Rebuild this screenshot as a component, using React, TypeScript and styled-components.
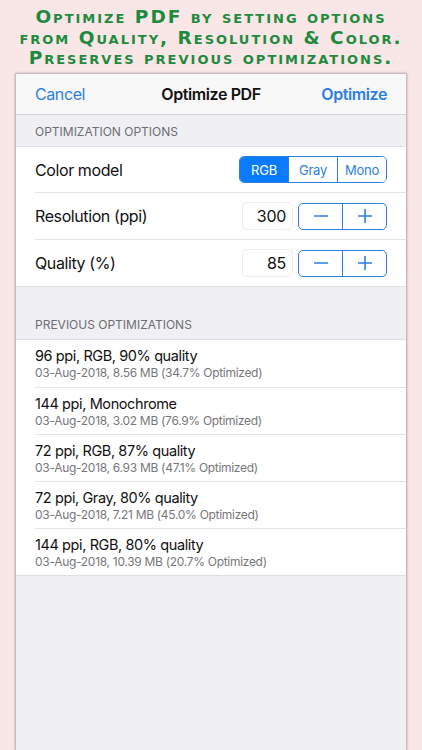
import styled, { createGlobalStyle } from "styled-components";

const GlobalStyle = createGlobalStyle`
  html, body {
    margin: 0;
    padding: 0;
    background: #f9e6e7;
  }
  body {
    font-family: Inter, "Liberation Sans", sans-serif;
  }
`;

const Page = styled.div`
  display: flex;
  flex-direction: column;
  height: 750px;
  overflow: hidden;
  background: #f9e6e7;
`;

const Headline = styled.h1`
  margin: 0;
  padding: 7px 0 5px;
  height: 74px;
  box-sizing: border-box;
  text-align: center;
  white-space: nowrap;
  font-family: "DejaVu Sans", sans-serif;
  font-variant: small-caps;
  font-weight: bold;
  font-size: 18.5px;
  line-height: 20.5px;
  letter-spacing: 2px;
  color: #1e8a3e;
`;

const Card = styled.div`
  flex: 1;
  margin: 0 16px;
  background: #efeff4;
  box-shadow: 0 0 2px 1px rgba(0, 0, 0, 0.28);
  display: flex;
  flex-direction: column;
`;

const NavBar = styled.div`
  height: 40px;
  display: flex;
  align-items: center;
  justify-content: space-between;
  padding: 0 19px;
  background: #f8f8f8;
  border-bottom: 1px solid #d4d4d8;
  position: relative;
`;

const NavButton = styled.span<{ $bold?: boolean }>`
  font-size: 16px;
  letter-spacing: -0.4px;
  color: #2c7ee3;
  font-weight: ${(p) => (p.$bold ? 600 : 400)};
`;

const NavTitle = styled.span`
  position: absolute;
  left: 0;
  right: 0;
  text-align: center;
  font-size: 16px;
  letter-spacing: -0.4px;
  font-weight: 600;
  color: #111;
  pointer-events: none;
`;

const SectionHeader = styled.div<{ $height: number }>`
  height: ${(p) => p.$height}px;
  display: flex;
  align-items: flex-end;
  padding: 0 19px 7px;
  box-sizing: border-box;
  font-size: 12px;
  color: #6d6d72;
`;

const Group = styled.div`
  background: #fff;
  border-top: 1px solid #e0e0e4;
  border-bottom: 1px solid #e0e0e4;
`;

const Row = styled.div<{ $height: number }>`
  height: ${(p) => p.$height}px;
  margin-left: 19px;
  padding-right: 19px;
  display: flex;
  align-items: center;
  justify-content: space-between;
  box-sizing: border-box;
  & + & {
    border-top: 1px solid #e3e3e7;
  }
`;

const Label = styled.span`
  font-size: 16px;
  letter-spacing: -0.4px;
  color: #111;
`;

const Segmented = styled.div`
  display: flex;
  border: 1px solid #2c7ee3;
  border-radius: 5px;
  overflow: hidden;
  height: 25px;
`;

const Segment = styled.div<{ $active?: boolean }>`
  width: 48px;
  display: flex;
  align-items: center;
  justify-content: center;
  font-size: 13px;
  letter-spacing: -0.2px;
  color: ${(p) => (p.$active ? "#fff" : "#2c7ee3")};
  background: ${(p) => (p.$active ? "#0a7bff" : "#fff")};
  & + & {
    border-left: 1px solid #2c7ee3;
  }
`;

const Controls = styled.div`
  display: flex;
  align-items: center;
  gap: 5px;
`;

const ValueBox = styled.div`
  width: 51px;
  height: 28px;
  box-sizing: border-box;
  border: 1px solid #ececef;
  border-radius: 5px;
  display: flex;
  align-items: center;
  justify-content: flex-end;
  padding-right: 6px;
  font-size: 16px;
  letter-spacing: -0.3px;
  color: #111;
`;

const Stepper = styled.div`
  display: flex;
  width: 89px;
  height: 27px;
  box-sizing: border-box;
  border: 1px solid #2c7ee3;
  border-radius: 5px;
  overflow: hidden;
`;

const StepButton = styled.div`
  flex: 1;
  display: flex;
  align-items: center;
  justify-content: center;
  & + & {
    border-left: 1px solid #2c7ee3;
  }
`;

const ItemText = styled.div`
  display: flex;
  flex-direction: column;
`;

const ItemTitle = styled.span`
  font-size: 14.5px;
  line-height: 18px;
  letter-spacing: -0.4px;
  color: #111;
`;

const ItemSub = styled.span`
  font-size: 12px;
  line-height: 15px;
  letter-spacing: -0.3px;
  color: #76767b;
`;

const Minus = () => (
  <svg width="16" height="16" viewBox="0 0 16 16">
    <path d="M1 8h14" stroke="#2c7ee3" strokeWidth="1.6" />
  </svg>
);

const Plus = () => (
  <svg width="16" height="16" viewBox="0 0 16 16">
    <path d="M1 8h14M8 1v14" stroke="#2c7ee3" strokeWidth="1.6" />
  </svg>
);

const history = [
  { title: "96 ppi, RGB, 90% quality", sub: "03-Aug-2018, 8.56 MB (34.7% Optimized)" },
  { title: "144 ppi, Monochrome", sub: "03-Aug-2018, 3.02 MB (76.9% Optimized)" },
  { title: "72 ppi, RGB, 87% quality", sub: "03-Aug-2018, 6.93 MB (47.1% Optimized)" },
  { title: "72 ppi, Gray, 80% quality", sub: "03-Aug-2018, 7.21 MB (45.0% Optimized)" },
  { title: "144 ppi, RGB, 80% quality", sub: "03-Aug-2018, 10.39 MB (20.7% Optimized)" },
];

function StepperRow({ label, value }: { label: string; value: string }) {
  return (
    <Row $height={47}>
      <Label>{label}</Label>
      <Controls>
        <ValueBox>{value}</ValueBox>
        <Stepper>
          <StepButton>
            <Minus />
          </StepButton>
          <StepButton>
            <Plus />
          </StepButton>
        </Stepper>
      </Controls>
    </Row>
  );
}

export default function App() {
  return (
    <Page>
      <GlobalStyle />
      <Headline>
        Optimize PDF by setting options
        <br />
        from Quality, Resolution &amp; Color.
        <br />
        Preserves previous optimizations.
      </Headline>
      <Card>
        <NavBar>
          <NavButton>Cancel</NavButton>
          <NavTitle>Optimize PDF</NavTitle>
          <NavButton $bold>Optimize</NavButton>
        </NavBar>
        <SectionHeader $height={31}>OPTIMIZATION OPTIONS</SectionHeader>
        <Group>
          <Row $height={45}>
            <Label>Color model</Label>
            <Segmented>
              <Segment $active>RGB</Segment>
              <Segment>Gray</Segment>
              <Segment>Mono</Segment>
            </Segmented>
          </Row>
          <StepperRow label="Resolution (ppi)" value="300" />
          <StepperRow label="Quality (%)" value="85" />
        </Group>
        <SectionHeader $height={52}>PREVIOUS OPTIMIZATIONS</SectionHeader>
        <Group>
          {history.map((h) => (
            <Row $height={47} key={h.title}>
              <ItemText>
                <ItemTitle>{h.title}</ItemTitle>
                <ItemSub>{h.sub}</ItemSub>
              </ItemText>
            </Row>
          ))}
        </Group>
      </Card>
    </Page>
  );
}
